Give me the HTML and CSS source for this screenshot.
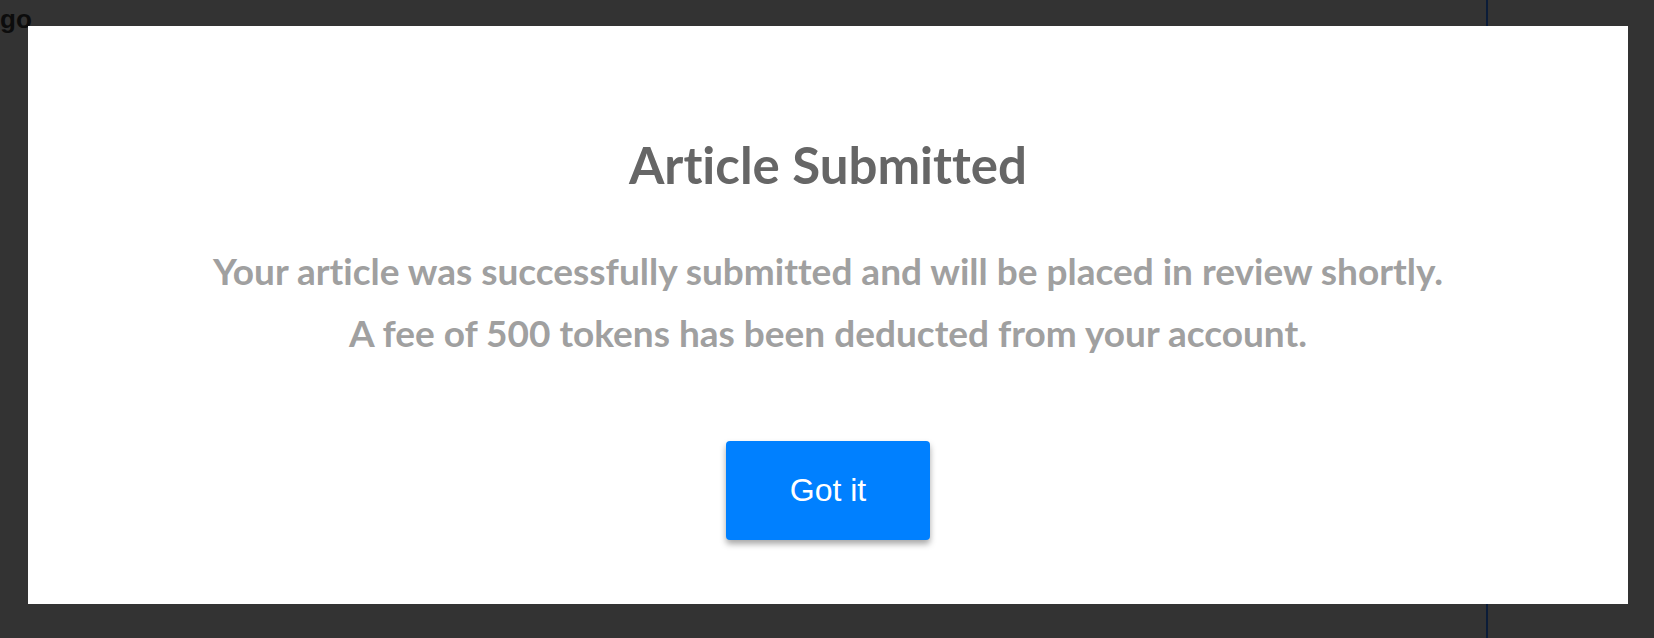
FILE: index.html
```html
<!DOCTYPE html>
<html>
<head>
<meta charset="utf-8">
<link rel="stylesheet" href="styles.css">
</head>
<body>
<div class="page">
  <div class="main">
    <h1 class="logo">go</h1>
  </div>
  <div class="side"></div>
</div>
<div class="modal">
  <h2 class="title">Article Submitted</h2>
  <p class="message">Your article was successfully submitted and will be placed in review shortly.<br>A fee of 500 tokens has been deducted from your account.</p>
  <button class="btn">Got it</button>
</div>
</body>
</html>
```
FILE: styles.css
```css
html, body {
  margin: 0;
  padding: 0;
  height: 100%;
}
body {
  background: #333333;
  font-family: "Liberation Sans", Arial, sans-serif;
  overflow: hidden;
}
.page {
  display: flex;
  height: 100%;
}
.main {
  width: 1486px;
  border-right: 2px solid #0b1c38;
}
.side {
  flex: 1;
}
.logo {
  margin: 2px 0 0;
  font-size: 26px;
  line-height: 34px;
  font-weight: bold;
  color: #0c0c0c;
}
.modal {
  position: fixed;
  left: 28px;
  top: 26px;
  width: 1600px;
  height: 578px;
  background: #ffffff;
  box-sizing: border-box;
  padding-top: 108px;
  display: flex;
  flex-direction: column;
  align-items: center;
  font-family: Lato, "Open Sans", sans-serif;
  font-variant-ligatures: none;
}
.title {
  margin: 0;
  font-size: 51px;
  line-height: 61px;
  font-weight: bold;
  color: #666666;
}
.message {
  margin: 45px 0 0;
  font-size: 37px;
  line-height: 62px;
  font-weight: bold;
  color: #a0a0a0;
  text-align: center;
}
.btn {
  margin-top: 77px;
  width: 204px;
  height: 99px;
  border: none;
  border-radius: 4px;
  background: #0080ff;
  color: #ffffff;
  font-family: "Liberation Sans", Arial, sans-serif;
  font-size: 32px;
  box-shadow: 0 4px 6px rgba(0, 0, 0, 0.35);
  padding: 0;
}
```
